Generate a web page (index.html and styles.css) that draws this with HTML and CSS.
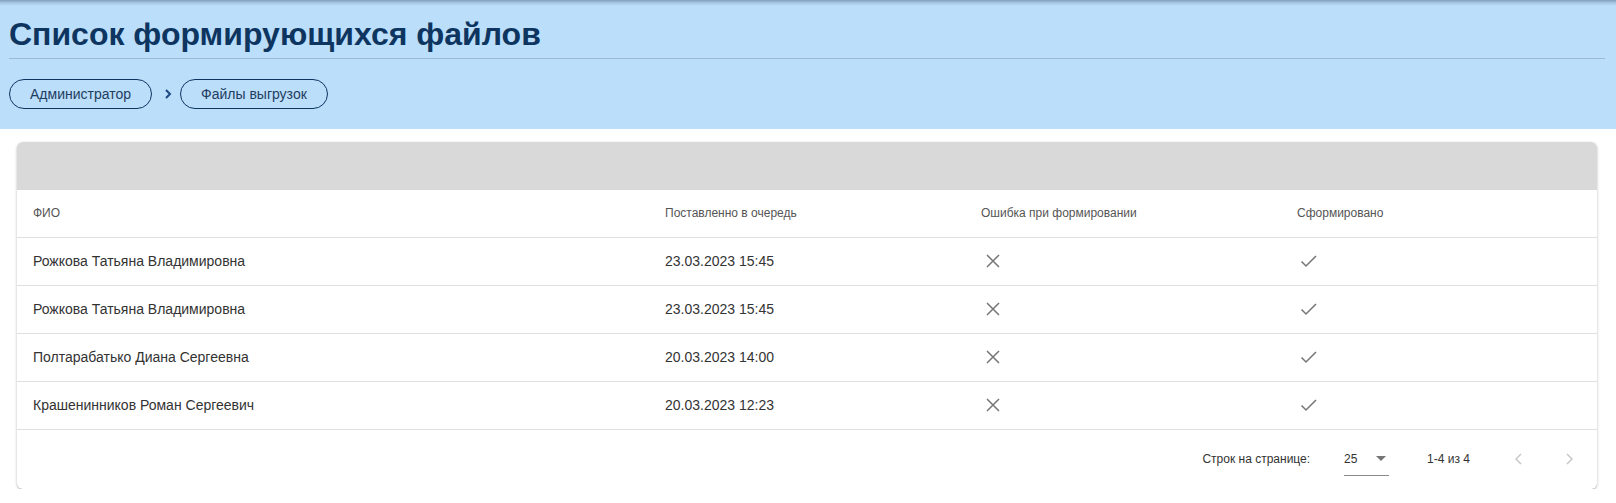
FILE: index.html
```html
<!doctype html>
<html lang="ru">
<head>
    <meta charset="UTF-8">
    <title>Список формирующихся файлов</title>
    <link rel="stylesheet" href="styles.css">
</head>
<body>

<div class="page-header">
    <h1 class="page-title">Список формирующихся файлов</h1>
    <div class="crumbs">
        <span class="crumb">Администратор</span>
        <svg class="crumb-sep" viewBox="0 0 10 12" width="10" height="12">
            <path d="M3 2l4 4-4 4" fill="none" stroke="#1c4a80" stroke-width="2"/>
        </svg>
        <span class="crumb">Файлы выгрузок</span>
    </div>
</div>

<div class="card">
    <div class="card-toolbar"></div>
    <table class="grid">
        <thead>
        <tr>
            <th class="col-name">ФИО</th>
            <th class="col-mid">Поставленно в очередь</th>
            <th class="col-mid">Ошибка при формировании</th>
            <th>Сформировано</th>
        </tr>
        </thead>
        <tbody>
        <tr>
            <td>Рожкова Татьяна Владимировна</td>
            <td>23.03.2023 15:45</td>
            <td><svg class="ico" viewBox="0 0 24 24"><path d="M6 6l12 12M18 6L6 18"/></svg></td>
            <td><svg class="ico" viewBox="0 0 24 24"><path d="M4.5 12.5l4.5 4.5 10-10"/></svg></td>
        </tr>
        <tr>
            <td>Рожкова Татьяна Владимировна</td>
            <td>23.03.2023 15:45</td>
            <td><svg class="ico" viewBox="0 0 24 24"><path d="M6 6l12 12M18 6L6 18"/></svg></td>
            <td><svg class="ico" viewBox="0 0 24 24"><path d="M4.5 12.5l4.5 4.5 10-10"/></svg></td>
        </tr>
        <tr>
            <td>Полтарабатько Диана Сергеевна</td>
            <td>20.03.2023 14:00</td>
            <td><svg class="ico" viewBox="0 0 24 24"><path d="M6 6l12 12M18 6L6 18"/></svg></td>
            <td><svg class="ico" viewBox="0 0 24 24"><path d="M4.5 12.5l4.5 4.5 10-10"/></svg></td>
        </tr>
        <tr>
            <td>Крашенинников Роман Сергеевич</td>
            <td>20.03.2023 12:23</td>
            <td><svg class="ico" viewBox="0 0 24 24"><path d="M6 6l12 12M18 6L6 18"/></svg></td>
            <td><svg class="ico" viewBox="0 0 24 24"><path d="M4.5 12.5l4.5 4.5 10-10"/></svg></td>
        </tr>
        </tbody>
    </table>
    <div class="pager">
        <span class="pager-label">Строк на странице:</span>
        <div class="pager-select">
            <span>25</span>
            <svg viewBox="0 0 10 5" width="10" height="5"><path d="M0 0h10L5 5z" fill="#757575"/></svg>
        </div>
        <span class="pager-range">1-4 из 4</span>
        <div class="pager-nav">
            <svg viewBox="0 0 24 24" width="24" height="24"><path d="M14 7l-5 5 5 5" fill="none" stroke="#c4c4c4" stroke-width="1.4"/></svg>
            <svg viewBox="0 0 24 24" width="24" height="24"><path d="M10 7l5 5-5 5" fill="none" stroke="#c4c4c4" stroke-width="1.4"/></svg>
        </div>
    </div>
</div>

</body>
</html>
```

FILE: styles.css
```css
* {
    padding: 0;
    margin: 0;
    box-sizing: border-box;
}

body {
    font-family: "Liberation Sans", Arial, sans-serif;
    background-color: #ffffff;
    color: #333333;
}

.page-header {
    background: linear-gradient(to bottom, #7f9fbc 0, #a9c8e6 3px, #bbdefb 6px, #bbdefb 100%);
    height: 129px;
    padding: 15px 11px 0 9px;
}

.page-title {
    font-size: 32px;
    font-weight: bold;
    color: #0d3560;
    line-height: 38px;
    padding-bottom: 5px;
    border-bottom: 1px solid #9db9d3;
}

.crumbs {
    display: flex;
    align-items: center;
    margin-top: 20px;
}

.crumb {
    display: inline-block;
    height: 30px;
    line-height: 28px;
    padding: 0 20px;
    border: 1px solid #0d3560;
    border-radius: 15px;
    font-size: 14px;
    color: #1f3d60;
}

.crumb-sep {
    margin: 0 7px 0 11px;
}

.card {
    margin: 13px 19px 0 17px;
    border-radius: 6px;
    background-color: #ffffff;
    box-shadow: 0 1px 3px rgba(0, 0, 0, 0.25), 0 1px 1px rgba(0, 0, 0, 0.1);
    overflow: hidden;
}

.card-toolbar {
    height: 48px;
    background-color: #d9d9d9;
}

.grid {
    width: 100%;
    border-collapse: collapse;
    table-layout: fixed;
}

.grid th,
.grid td {
    text-align: left;
    padding: 0 16px;
    border-bottom: 1px solid #e0e0e0;
}

.grid th {
    height: 47px;
    font-size: 12px;
    font-weight: normal;
    color: #555555;
}

.grid td {
    height: 48px;
    font-size: 14px;
    color: #333333;
}

.grid .col-name {
    width: 40%;
}

.grid .col-mid {
    width: 20%;
}

.ico {
    display: block;
    width: 24px;
    height: 24px;
    fill: none;
    stroke: #757575;
    stroke-width: 1.5;
}

.pager {
    display: flex;
    align-items: center;
    justify-content: flex-end;
    height: 59px;
    padding-right: 16px;
    font-size: 12px;
    color: #333333;
}

.pager-select {
    display: flex;
    align-items: center;
    justify-content: space-between;
    width: 45px;
    height: 33px;
    margin-left: 34px;
    padding-right: 3px;
    border-bottom: 1px solid #8a8a8a;
}

.pager-range {
    margin-left: 38px;
}

.pager-nav {
    display: flex;
    gap: 26px;
    margin-left: 37px;
}
```
